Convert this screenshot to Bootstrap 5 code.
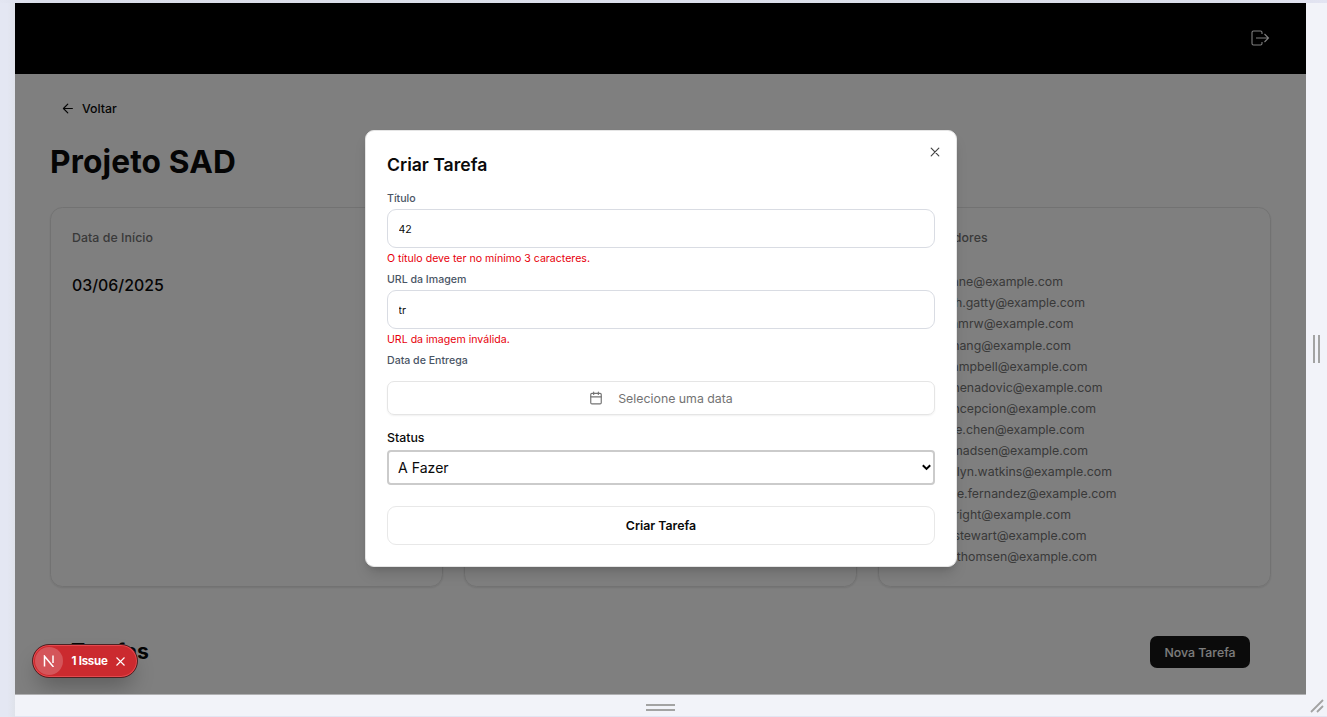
<!DOCTYPE html>
<html lang="pt-BR">
<head>
<meta charset="utf-8">
<meta name="viewport" content="width=device-width, initial-scale=1">
<title>Projeto SAD</title>
<link href="https://cdn.jsdelivr.net/npm/bootstrap@5.3.0/dist/css/bootstrap.min.css" rel="stylesheet">
<style>
body{font-family:Inter,"Liberation Sans",sans-serif;font-size:12.34px;line-height:21px;color:#0a0a0a;background:#f2f3f9;overflow:hidden}
.stage{width:1327px;height:717px;display:grid;grid-template:3px 691px 23px/15px 1291px 21px;border-bottom:1px solid #e2e5f2}
.top-edge{grid-column:1/4;background:linear-gradient(90deg,#e3e6f2,#dadde9 3%,#dcdfeb 50%,#dadde9 92%,#e3e4f2)}
.left-edge{grid-row:2/4;background:linear-gradient(90deg,#e4e7f3 50%,#dfe2ea)}
.viewport{background:#fff;box-shadow:0 1px 0 #b0b0b2}
.topbar{height:71px;background:#000;padding:0 36px 2px 0;color:#fff}
.dim{inset:0;background:rgba(0,0,0,.5)}
.page-body{padding:24px 35px 0}
.back{height:21px;padding-left:11px;gap:8px;font-weight:500}
h1{font-size:31.7px;font-weight:700;line-height:40px;margin:23px 0 25px;letter-spacing:.004em}
.panels{display:grid;grid-template-columns:repeat(3,393px);gap:21px;height:380px}
.panel{border:1px solid #e5e5e5;border-radius:12.5px;box-shadow:0 1px 2px rgba(0,0,0,.1);padding:19px 21px}
.panel-title{font-weight:500;color:#737373;letter-spacing:.06px}
.date{font-size:15.87px;font-weight:500;margin-top:27px}
.mails{margin:23.2px 0 0;color:#737373}
.mails li{height:21.15px;line-height:21.15px;width:var(--end);text-align:right;white-space:nowrap}
.tasks{margin:49px 21px 0;height:32px}
.tasks h2{font-size:21.2px;font-weight:700;margin:0}
.btn-new{background:#171717;color:#fafafa;font-size:12.34px;font-weight:500;width:100px;height:32px;padding:0;border-radius:7px;border:0}
.dialog-box{left:350px;top:127px;width:592px;height:437px;border:1px solid #e5e5e5;border-radius:9px;background:#fff;padding:22px 21px;box-shadow:0 9px 14px -3px rgba(0,0,0,.15),0 4px 6px -4px rgba(0,0,0,.15)}
.dialog-box h3{font-size:17.63px;font-weight:600;line-height:24px;margin:0 0 11px}
.lbl{font-size:10.58px;font-weight:500;color:#4a5565;height:21px;line-height:21px}
.err{font-size:10.58px;color:#e7000b;height:21px}
.dialog-box .form-control{height:39px;border:1px solid #d9dce3;border-radius:9px;font-size:10.58px;padding:1px 10.5px 0;color:#0a0a0a}
.btn-date{height:34px;margin-top:10px;border:1px solid #e5e5e5;border-radius:7px;color:#737373;gap:15px;box-shadow:0 1px 2px rgba(0,0,0,.06)}
.status{font-weight:500;margin:12px 0 2px}
.picker{height:35px;border:2px solid #cbcbcb;border-radius:4px;font-size:14.1px;padding:0 2px 0 9px}
.btn-go{height:39px;margin-top:21px;border:1px solid #e8e8e8;border-radius:9px;font-weight:600}
.x-close{top:16px;right:16.5px}
.issue{left:16.5px;top:641px;width:106px;height:34px;border-radius:17px;background:#cb2a2f;border:1px solid #4a2224;box-shadow:inset 0 0 0 1px #e5484d,0 12px 22px -5px rgba(0,0,0,.3);color:#fff;font-size:11.5px;font-weight:700;padding-left:2px}
.issue-logo{width:28px;height:28px;border-radius:50%;background:#d4555a}
.issue-text{margin:0 8px 0 9px;letter-spacing:-.25px}
.grip-v{width:7px;height:28px;border:solid #a3a3a3;border-width:0 2px}
.grip-h{width:29px;height:7px;border:solid #a3a3a3;border-width:2px 0}
</style>
</head>
<body>
<div class="stage">
  <div class="top-edge"></div>
  <div class="left-edge"></div>
  <div class="viewport position-relative overflow-hidden">
    <header class="topbar d-flex align-items-center justify-content-end">
      <svg width="20" height="18" viewBox="0 0 20 18" fill="none" stroke="currentColor" stroke-width="1.1"><path d="M12 5V3.500a1.500 1.500 0 0 0-1.500-1.500H3.500A1.500 1.500 0 0 0 2 3.500v11A1.500 1.500 0 0 0 3.500 16h7a1.500 1.500 0 0 0 1.500-1.500V13M6 9h12.500M14.500 5l4 4-4 4"/></svg>
    </header>
    <main class="page-body">
      <div class="back d-flex align-items-center">
        <svg width="13" height="13" viewBox="0 0 24 24" fill="none" stroke="currentColor" stroke-width="2.200" stroke-linecap="round" stroke-linejoin="round"><path d="m12.500 20-8-8 8-8M21 12H4.500"/></svg>
        <span>Voltar</span>
      </div>
      <h1>Projeto SAD</h1>
      <div class="panels">
        <section class="panel"><div class="panel-title">Data de Início</div><div class="date">03/06/2025</div></section>
        <section class="panel"></section>
        <section class="panel"><div class="panel-title">Colaboradores</div>
          <ul class="mails list-unstyled">
            <li style="--end:163px">iane@example.com</li>
            <li style="--end:185px">nh.gatty@example.com</li>
            <li style="--end:173.500px">amrw@example.com</li>
            <li style="--end:171px">hang@example.com</li>
            <li style="--end:187.500px">ampbell@example.com</li>
            <li style="--end:202.500px">nenadovic@example.com</li>
            <li style="--end:196px">ncepcion@example.com</li>
            <li style="--end:184.500px">ie.chen@example.com</li>
            <li style="--end:188px">madsen@example.com</li>
            <li style="--end:212px">elyn.watkins@example.com</li>
            <li style="--end:216.500px">ie.fernandez@example.com</li>
            <li style="--end:171px">right@example.com</li>
            <li style="--end:186.500px">stewart@example.com</li>
            <li style="--end:197px">.thomsen@example.com</li>
          </ul>
        </section>
      </div>
      <div class="tasks d-flex align-items-center justify-content-between"><h2>Tarefas</h2><button class="btn-new">Nova Tarefa</button></div>
    </main>
    <div class="dim position-absolute"></div>
    <div class="dialog-box position-absolute" role="dialog">
      <h3>Criar Tarefa</h3>
      <svg class="x-close position-absolute" width="10" height="10" viewBox="0 0 10 10" fill="none" stroke="#444" stroke-width="1.2" stroke-linecap="round"><path d="m1.200 1.200 7.600 7.600M8.800 1.200 1.200 8.800"/></svg>
      <div class="lbl">Título</div>
      <input class="form-control" value="42">
      <div class="err">O título deve ter no mínimo 3 caracteres.</div>
      <div class="lbl">URL da Imagem</div>
      <input class="form-control" value="tr">
      <div class="err">URL da imagem inválida.</div>
      <div class="lbl">Data de Entrega</div>
      <div class="btn-date d-flex align-items-center justify-content-center">
        <svg width="14" height="14" viewBox="0 0 24 24" fill="none" stroke="currentColor" stroke-width="2" stroke-linecap="round" stroke-linejoin="round"><path d="M8 2v4M16 2v4M3 10h18"/><rect x="3" y="4" width="18" height="18" rx="2"/></svg>
        <span>Selecione uma data</span>
      </div>
      <div class="status">Status</div>
      <div class="picker d-flex align-items-center justify-content-between"><span>A Fazer</span>
        <svg width="9" height="7" viewBox="0 0 9 7" fill="none" stroke="#000" stroke-width="2"><path d="m.8 1.200 3.700 3.700 3.700-3.700"/></svg></div>
      <div class="btn-go d-flex align-items-center justify-content-center">Criar Tarefa</div>
    </div>
    <div class="issue position-absolute d-flex align-items-center">
      <span class="issue-logo d-flex align-items-center justify-content-center"><svg width="12" height="12" viewBox="0 0 12 12" fill="none" stroke="#fff" stroke-width="1.500"><path d="M1.500 11.500V1.200L10.500 12"/><path d="M10 .5v7.500"/></svg></span>
      <span class="issue-text">1 Issue</span>
      <svg width="9" height="9" viewBox="0 0 9 9" fill="none" stroke="#fff" stroke-width="1.100"><path d="m.5.5 8 8M8.500.5l-8 8"/></svg>
    </div>
  </div>
  <div class="d-flex align-items-center justify-content-center"><div class="grip-v"></div></div>
  <div class="d-flex align-items-center justify-content-center pt-1"><div class="grip-h"></div></div>
  <div class="d-flex align-items-center justify-content-center"><svg width="14" height="14" viewBox="0 0 14 14" stroke="#a3a3a3" stroke-width="1.800"><path d="M1 13 13 1M7 13l6-6"/></svg></div>
</div>
<script src="https://cdn.jsdelivr.net/npm/bootstrap@5.3.0/dist/js/bootstrap.bundle.min.js"></script>
</body>
</html>
